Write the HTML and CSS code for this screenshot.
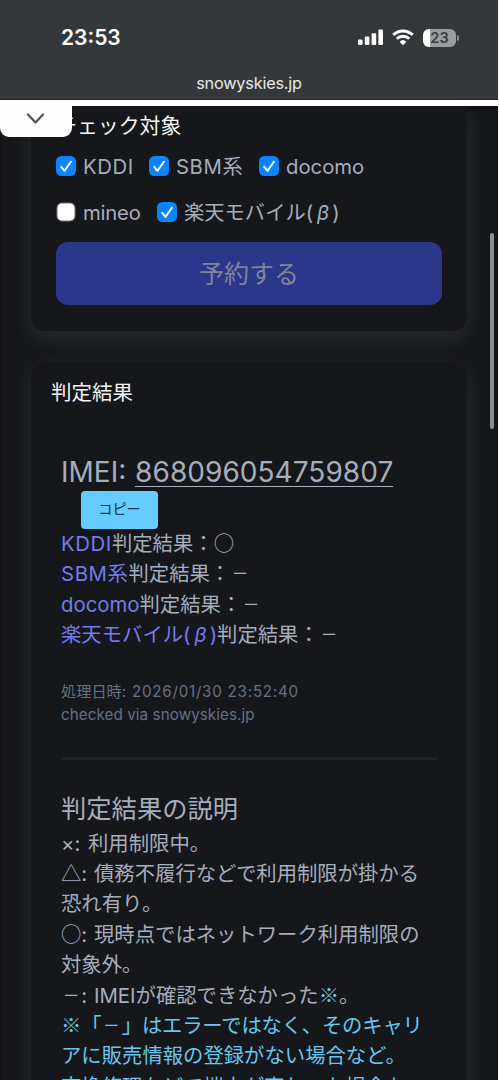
FILE: index.html
```html
<!DOCTYPE html>
<html lang="ja">
<head>
<meta charset="utf-8">
<title>snowyskies.jp</title>
<link rel="stylesheet" href="styles.css">
</head>
<body>
<div class="phone">
  <header class="browser">
    <div class="status">
      <span class="clock">23:53</span>
      <div class="indicators">
        <svg class="signal" width="26" height="17" viewBox="0 0 26 17" fill="#fff"><rect x="0" y="10.5" width="4.6" height="5.5" rx="1.2"/><rect x="6.8" y="7.5" width="4.6" height="8.5" rx="1.2"/><rect x="13.6" y="4.2" width="4.6" height="11.8" rx="1.2"/><rect x="20.4" y="0.5" width="4.6" height="15.5" rx="1.2"/></svg>
        <svg class="wifi" width="22" height="17" viewBox="0 0 22 17" fill="none" stroke="#fff" stroke-width="2.9"><path d="M1.3 5.9a14 14 0 0 1 19.4 0"/><path d="M4.8 9.7a9 9 0 0 1 12.4 0"/><path d="M11 16.2l3.4-3.5a5 5 0 0 0-6.8 0z" fill="#fff" stroke="none"/></svg>
        <div class="battery"><span class="level">23</span><i class="nub"></i></div>
      </div>
    </div>
    <div class="address">snowyskies.jp</div>
  </header>
  <div class="divider"></div>
  <main class="page">
    <section class="card check">
      <h2 class="heading">チェック対象</h2>
      <div class="options">
        <label class="option kddi"><svg class="box" viewBox="0 0 20 20"><rect width="20" height="20" rx="5.5" fill="#0a84ff"/><path d="M5.2 10.8l3.4 4L14.9 5.8" class="tick"/></svg><span class="caps">KDDI</span></label>
        <label class="option sbm"><svg class="box" viewBox="0 0 20 20"><rect width="20" height="20" rx="5.5" fill="#0a84ff"/><path d="M5.2 10.8l3.4 4L14.9 5.8" class="tick"/></svg><span class="caps">SBM系</span></label>
        <label class="option docomo"><svg class="box" viewBox="0 0 20 20"><rect width="20" height="20" rx="5.5" fill="#0a84ff"/><path d="M5.2 10.8l3.4 4L14.9 5.8" class="tick"/></svg><span>docomo</span></label>
      </div>
      <div class="options">
        <label class="option mineo"><svg class="box" viewBox="0 0 20 20"><rect x="1" y="1" width="18" height="18" rx="5" fill="#fff" stroke="#777" stroke-width="1"/></svg><span>mineo</span></label>
        <label class="option rakuten"><svg class="box" viewBox="0 0 20 20"><rect width="20" height="20" rx="5.5" fill="#0a84ff"/><path d="M5.2 10.8l3.4 4L14.9 5.8" class="tick"/></svg><span>楽天モバイル(<i class="beta">β</i>)</span></label>
      </div>
      <button class="reserve">予約する</button>
    </section>
    <section class="card result">
      <h2 class="heading">判定結果</h2>
      <div class="body">
        <div class="imei">IMEI: <span class="number">868096054759807</span></div>
        <button class="copy">コピー</button>
        <div class="line"><span class="carrier caps">KDDI</span>判定結果：<span class="mark">○</span></div>
        <div class="line"><span class="carrier caps">SBM系</span>判定結果：<span class="mark minus">−</span></div>
        <div class="line"><span class="carrier">docomo</span>判定結果：<span class="mark minus">−</span></div>
        <div class="line"><span class="carrier">楽天モバイル(<i class="beta">β</i>)</span>判定結果：<span class="mark minus">−</span></div>
        <div class="meta"><div class="date">処理日時<span class="stamp">: 2026/01/30 23:52:40</span></div><div class="via">checked via snowyskies.jp</div></div>
        <hr class="rule">
        <h3 class="subheading">判定結果の説明</h3>
        <div class="notes">
          <div class="line"><span class="key cross">×:</span>利用制限中。</div>
          <div class="line"><span class="key"><span class="mark">△</span>:</span>債務不履行などで利用制限が掛かる</div>
          <div class="line">恐れ有り。</div>
          <div class="line"><span class="key"><span class="mark">○</span>:</span>現時点ではネットワーク利用制限の</div>
          <div class="line">対象外。</div>
          <div class="line"><span class="key"><span class="mark minus">−</span>:</span>IMEIが確認できなかった<span class="mark note">※</span>。</div>
          <div class="line note wide"><span class="mark">※</span>「<span class="mark minus">−</span>」はエラーではなく、そのキャリ</div>
          <div class="line note">アに販売情報の登録がない場合など。</div>
          <div class="line note">交換修理などで端末が変わった場合も</div>
        </div>
      </div>
    </section>
  </main>
  <div class="tab"><svg width="20" height="12" viewBox="0 0 20 12" fill="none" stroke="#505356" stroke-width="2.2" stroke-linecap="round" stroke-linejoin="round"><path d="M2 1.5l7.5 8 7.5-8"/></svg></div>
  <div class="scrollbar"></div>
</div>
</body>
</html>
```
FILE: styles.css
```css
* { box-sizing: border-box; }
body { margin: 0; background: #f4f4f4; }
.phone {
  position: relative; width: 498px; height: 1080px; overflow: hidden;
  display: flex; flex-direction: column; background: #16171a;
  font-family: Inter, "Noto Sans CJK JP", sans-serif;
  color: #a6adbb; white-space: nowrap;
}
.browser { height: 100px; flex: none; background: #35383b; border-bottom: 1px solid #222326; color: #fff; }
.status { height: 66px; padding: 9px 42px 0 61px; display: flex; justify-content: space-between; align-items: center; }
.clock { font: 600 21px/26px Inter, sans-serif; }
.indicators { display: flex; align-items: center; }
.wifi { margin-left: 8px; }
.battery {
  position: relative; width: 33px; height: 18px; margin-left: 9px; border-radius: 6px;
  background: linear-gradient(to right, #fff 7px, #9b9c9e 7px);
  display: flex; justify-content: center;
}
.level { font: 600 14.5px/18px Inter, sans-serif; color: #393b3e; }
.nub { position: absolute; left: 34px; top: 6px; width: 2px; height: 6px; border-radius: 0 3px 3px 0; background: #8b8d8f; }
.address { font: 400 16.3px/20px Inter, sans-serif; letter-spacing: -.2px; text-align: center; padding-top: 7px; color: #e6e8e9; }
.divider { height: 6px; flex: none; background: #fdfdfd; }
.page { flex: none; padding: 0 31px; display: flex; flex-direction: column; gap: 31px; box-shadow: inset 0 3px 2px #101014; }
.card { background: #16171b; box-shadow: 0 7px 22px 2px rgba(255, 255, 255, .075); }
.check { height: 225px; padding: 5px 25px 0; border-radius: 0 0 14px 14px; }
.result { height: 760px; padding: 16px 20px 0; border-radius: 15px; }
.heading { margin: 0; font-size: 20.5px; line-height: 30px; font-weight: 400; color: #f5f5f6; }
.check .heading { font-size: 20.9px; }
.options { display: flex; height: 46px; align-items: center; font-size: 20.3px; line-height: 32px; }
.check .heading + .options { margin-top: 2px; }
.option { display: flex; align-items: center; gap: 7px; }
.option span { padding-top: 2px; }
.box { width: 20px; height: 20px; flex: none; }
.tick { fill: none; stroke: #fff; stroke-width: 2; stroke-linecap: round; stroke-linejoin: round; }
.kddi { width: 93px; }
.sbm { width: 110px; }
.mineo { width: 101px; }
.mineo span { letter-spacing: -.2px; }
.caps { letter-spacing: .6px; }
.beta { padding: 0 3px 0 4px; }
.reserve {
  display: block; width: 386px; height: 63px; margin: 7px 0 0; padding: 0 0 2px; border: 0; border-radius: 12px;
  background: #2b378b; color: #80849b; font: 400 25px/61px "Noto Sans CJK JP", sans-serif;
}
.body { padding: 45px 10px 0; }
.imei { font-size: 28px; line-height: 38px; height: 38px; }
.number { display: inline-block; height: 34px; line-height: 38px; margin-left: 1px; letter-spacing: .05px; border-bottom: 1px solid #a6adbb; }
.copy {
  display: block; width: 77px; height: 38px; margin: 0 0 0 20px; padding: 0 0 3px; border: 0; border-radius: 4px;
  background: #66ccff; color: #0d3446; font: 400 14.2px/35px "Noto Sans CJK JP", sans-serif;
}
.line { height: 30.4px; font-size: 20.35px; line-height: 30.4px; }
.carrier { color: #747bea; }
.mark { display: inline-block; width: 20.3px; text-align: center; font-family: "Noto Sans CJK JP", sans-serif; line-height: 20px; }
.minus { transform: scaleX(1.25); }
.key { display: inline-block; width: 33px; line-height: 24px; }
.cross { width: 27px; }
.note { color: #66c7ef; }
.wide { letter-spacing: -.2px; }
.meta { padding-top: 29px; font-size: 15.2px; line-height: 23px; color: #667084; }
.stamp { letter-spacing: .75px; }
.via { letter-spacing: .08px; }
.rule { height: 3px; margin: 31px 0 0; border: 0; background: #202227; }
.subheading { margin: 30px 0 0; font-weight: 400; font-size: 25.3px; line-height: 38px; }
.notes { padding-top: 1px; }
.tab {
  position: absolute; left: 0; top: 100px; width: 72px; height: 37px; border-radius: 0 0 9px 9px;
  background: #fdfdfd; display: flex; align-items: center; justify-content: center;
}
.scrollbar { position: absolute; left: 490px; top: 233px; width: 4px; height: 196px; border-radius: 2px; background: #8c8d90; }
```
